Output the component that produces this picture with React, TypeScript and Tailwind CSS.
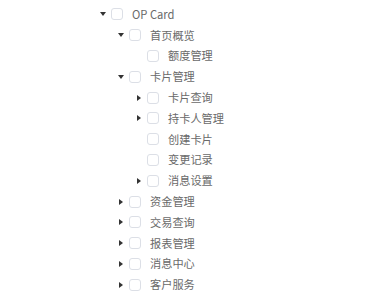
import React from "react";

type Node = { label: string; level: 0 | 1 | 2; icon: "down" | "right" | "none" };

const nodes: Node[] = [
  { label: "OP Card", level: 0, icon: "down" },
  { label: "首页概览", level: 1, icon: "down" },
  { label: "额度管理", level: 2, icon: "none" },
  { label: "卡片管理", level: 1, icon: "down" },
  { label: "卡片查询", level: 2, icon: "right" },
  { label: "持卡人管理", level: 2, icon: "right" },
  { label: "创建卡片", level: 2, icon: "none" },
  { label: "变更记录", level: 2, icon: "none" },
  { label: "消息设置", level: 2, icon: "right" },
  { label: "资金管理", level: 1, icon: "right" },
  { label: "交易查询", level: 1, icon: "right" },
  { label: "报表管理", level: 1, icon: "right" },
  { label: "消息中心", level: 1, icon: "right" },
  { label: "客户服务", level: 1, icon: "right" },
];

const padByLevel: Record<number, string> = {
  0: "pl-[97px]",
  1: "pl-[115px]",
  2: "pl-[133px]",
};

function Caret({ kind }: { kind: Node["icon"] }) {
  return (
    <span className="w-[12px] h-[12px] flex items-center justify-center">
      {kind === "down" && (
        <svg width="6" height="4" viewBox="0 0 6 4">
          <polygon points="0,0 6,0 3,4" fill="#333333" />
        </svg>
      )}
      {kind === "right" && (
        <svg width="4" height="6" viewBox="0 0 4 6">
          <polygon points="0,0 4,3 0,6" fill="#333333" />
        </svg>
      )}
    </span>
  );
}

export default function App() {
  return (
    <div
      className="w-[385px] h-[294px] bg-white overflow-hidden pt-[4px] flex flex-col"
      style={{ fontFamily: '"Noto Sans CJK SC", "Noto Sans", sans-serif' }}
    >
      {nodes.map((n, i) => (
        <div key={i} className={`flex items-center h-[20.8px] shrink-0 ${padByLevel[n.level]}`}>
          <Caret kind={n.icon} />
          <span className="ml-[2px] w-[12px] h-[12px] rounded-[3px] border border-[#dcdfe6] bg-white box-border" />
          <span className="ml-[9px] text-[11.2px] leading-none text-[#6a6a6a] whitespace-nowrap">
            {n.label}
          </span>
        </div>
      ))}
    </div>
  );
}
